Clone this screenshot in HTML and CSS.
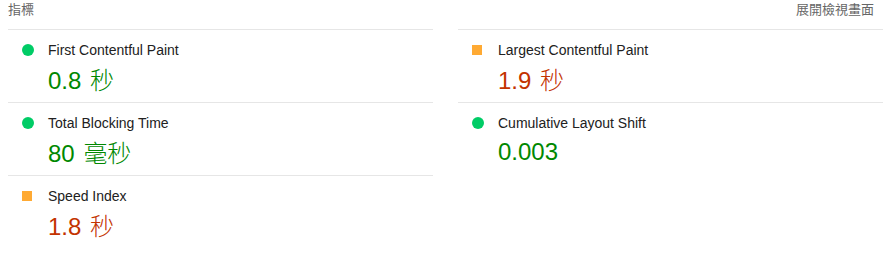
FILE: index.html
```html
<!DOCTYPE html>
<html lang="zh-Hant">
<head>
    <meta charset="UTF-8">
    <meta name="viewport" content="width=device-width, initial-scale=1.0">
    <link rel="stylesheet" href="styles.css">
    <title>指標</title>
</head>
<body>
    <div class="metrics">
        <div class="metrics-header">
            <span class="metrics-title">指標</span>
            <span class="metrics-toggle">展開檢視畫面</span>
        </div>

        <div class="metrics-grid">
            <div class="metric">
                <span class="icon pass"></span>
                <div class="metric-body">
                    <div class="metric-name">First Contentful Paint</div>
                    <div class="metric-value pass">0.8 <span class="unit">秒</span></div>
                </div>
            </div>
            <div class="metric">
                <span class="icon average"></span>
                <div class="metric-body">
                    <div class="metric-name">Largest Contentful Paint</div>
                    <div class="metric-value average">1.9 <span class="unit">秒</span></div>
                </div>
            </div>
            <div class="metric">
                <span class="icon pass"></span>
                <div class="metric-body">
                    <div class="metric-name">Total Blocking Time</div>
                    <div class="metric-value pass">80 <span class="unit">毫秒</span></div>
                </div>
            </div>
            <div class="metric">
                <span class="icon pass"></span>
                <div class="metric-body">
                    <div class="metric-name">Cumulative Layout Shift</div>
                    <div class="metric-value pass">0.003</div>
                </div>
            </div>
            <div class="metric">
                <span class="icon average"></span>
                <div class="metric-body">
                    <div class="metric-name">Speed Index</div>
                    <div class="metric-value average">1.8 <span class="unit">秒</span></div>
                </div>
            </div>
        </div>
    </div>
</body>
</html>
```

FILE: styles.css
```css
body {
    margin: 0;
    padding: 0 8px;
    background-color: #fff;
    font-family: "Liberation Sans", Arial, "Noto Sans CJK TC", sans-serif;
}

.metrics {
    width: 875px;
}

.metrics-header {
    display: flex;
    justify-content: space-between;
    padding: 0 9px 9px 0;
    font-size: 13px;
    line-height: 20px;
    color: #666;
}

.metrics-grid {
    display: grid;
    grid-template-columns: 1fr 1fr;
    column-gap: 25px;
}

.metric {
    display: flex;
    align-items: flex-start;
    border-top: 1px solid #e6e6e6;
    padding: 10px 0 8px 14px;
    height: 54px;
}

.icon {
    flex: none;
    margin-top: 4px;
    margin-right: 14px;
}

.icon.pass {
    width: 12px;
    height: 12px;
    border-radius: 50%;
    background-color: #0c6;
}

.icon.average {
    width: 10px;
    height: 10px;
    margin: 5px 16px 0 0;
    background-color: #fa3;
}

.metric-name {
    font-size: 14px;
    line-height: 20px;
    color: #212121;
}

.metric-value {
    margin-top: 4px;
    font-size: 24px;
    line-height: 30px;
}

.metric-value .unit {
    font-family: "Noto Sans CJK TC", sans-serif;
    font-weight: 300;
    margin-left: 2px;
}

.metric-value.pass {
    color: #080;
}

.metric-value.average {
    color: #c33300;
}
```
